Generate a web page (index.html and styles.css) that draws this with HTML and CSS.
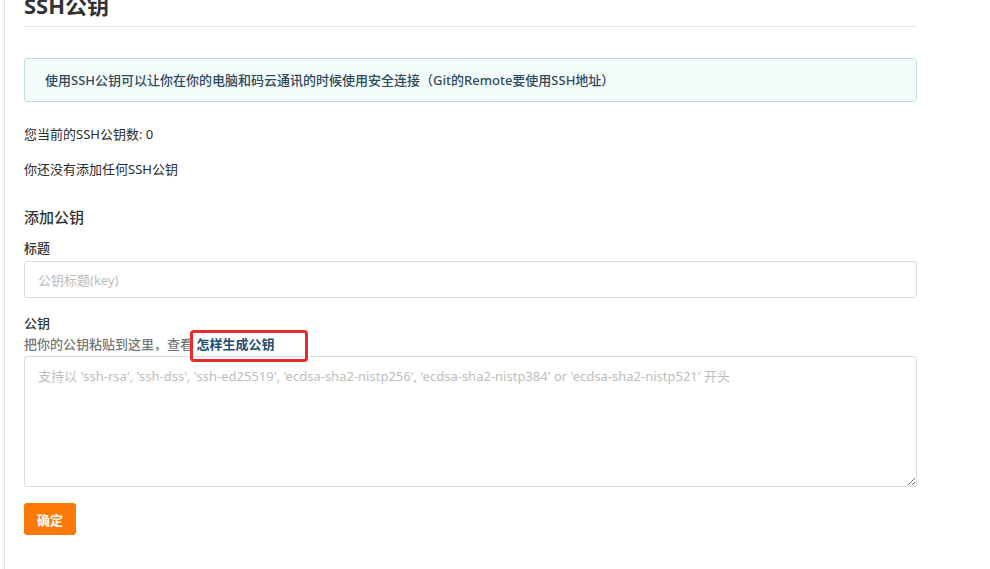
FILE: index.html
```html
<!DOCTYPE html>
<html lang="zh-CN">
<head>
    <meta charset="UTF-8">
    <title>SSH公钥</title>
    <link rel="stylesheet" href="styles.css">
</head>
<body>
    <div class="page">
        <div class="content">
            <h2 class="title">SSH公钥</h2>

            <div class="info-box">使用SSH公钥可以让你在你的电脑和码云通讯的时候使用安全连接（Git的Remote要使用SSH地址）</div>

            <p class="line">您当前的SSH公钥数: 0</p>
            <p class="line">你还没有添加任何SSH公钥</p>

            <h3 class="sub-title">添加公钥</h3>
            <form>
                <div class="field">
                    <label for="key-title">标题</label>
                    <input type="text" id="key-title" placeholder="公钥标题(key)">
                </div>
                <div class="field">
                    <label for="key-body">公钥</label>
                    <div class="hint">把你的公钥粘贴到这里，查看 <a href="#" class="help-link">怎样生成公钥<span class="mark"></span></a></div>
                    <textarea id="key-body" placeholder="支持以 'ssh-rsa', 'ssh-dss', 'ssh-ed25519', 'ecdsa-sha2-nistp256', 'ecdsa-sha2-nistp384' or 'ecdsa-sha2-nistp521' 开头"></textarea>
                </div>
                <button type="submit" class="submit-btn">确定</button>
            </form>
        </div>
    </div>
</body>
</html>
```

FILE: styles.css
```css
html, body {
    margin: 0;
    height: 100%;
    overflow: hidden;
}

body {
    font-family: "Noto Sans", "Noto Sans CJK SC", sans-serif;
    background: #fff;
    color: #333;
    font-size: 13px;
}

.page {
    display: flow-root;
    box-sizing: border-box;
    margin-left: 4px;
    border-left: 1px solid #e4e4e4;
    min-height: 100%;
    padding-left: 19px;
}

.content {
    width: 893px;
}

.title {
    font-size: 22px;
    font-weight: bold;
    color: #333;
    margin: -10px 0 0;
    line-height: 30px;
    padding-bottom: 6px;
    border-bottom: 1px solid #e6e6e6;
}

.info-box {
    margin-top: 31px;
    height: 42px;
    line-height: 42px;
    padding-left: 20px;
    background: #f4fbfb;
    border: 1px solid #bfe0e0;
    border-radius: 3px;
    color: #2f4a5a;
    font-weight: 500;
}

.line {
    margin: 0;
    line-height: 20px;
    color: #2b2b2b;
}

.info-box + .line {
    margin-top: 22px;
}

.line + .line {
    margin-top: 15px;
}

.sub-title {
    font-size: 15px;
    font-weight: 500;
    margin: 27px 0 0;
    line-height: 22px;
}

.field label {
    display: block;
    font-weight: 500;
    line-height: 20px;
    margin-top: 10px;
}

.field input {
    display: block;
    box-sizing: border-box;
    width: 100%;
    height: 37px;
    margin-top: 3px;
    padding: 0 13px;
    border: 1px solid #dcdcdc;
    border-radius: 3px;
    font-family: inherit;
    font-size: 13px;
}

.field textarea {
    display: block;
    box-sizing: border-box;
    width: 100%;
    height: 131px;
    margin-top: 2px;
    padding: 9px 13px;
    border: 1px solid #dcdcdc;
    border-radius: 3px;
    font-family: inherit;
    font-size: 13px;
    resize: both;
}

::placeholder {
    color: #bdbdbd;
}

.field + .field label {
    margin-top: 15px;
}

.hint {
    color: #777;
    font-weight: 500;
    line-height: 20px;
    margin-top: 1px;
}

.help-link {
    position: relative;
    color: #1f4f6f;
    font-weight: bold;
    text-decoration: none;
}

.help-link .mark {
    position: absolute;
    left: -6px;
    top: -5px;
    width: 112px;
    height: 26px;
    border: 3px solid #e52b2b;
    border-radius: 4px;
}

.submit-btn {
    margin-top: 16px;
    width: 52px;
    height: 32px;
    border: none;
    border-radius: 3px;
    background: #fc7a03;
    color: #fff;
    font-family: inherit;
    font-weight: bold;
    font-size: 13px;
    cursor: pointer;
}
```
